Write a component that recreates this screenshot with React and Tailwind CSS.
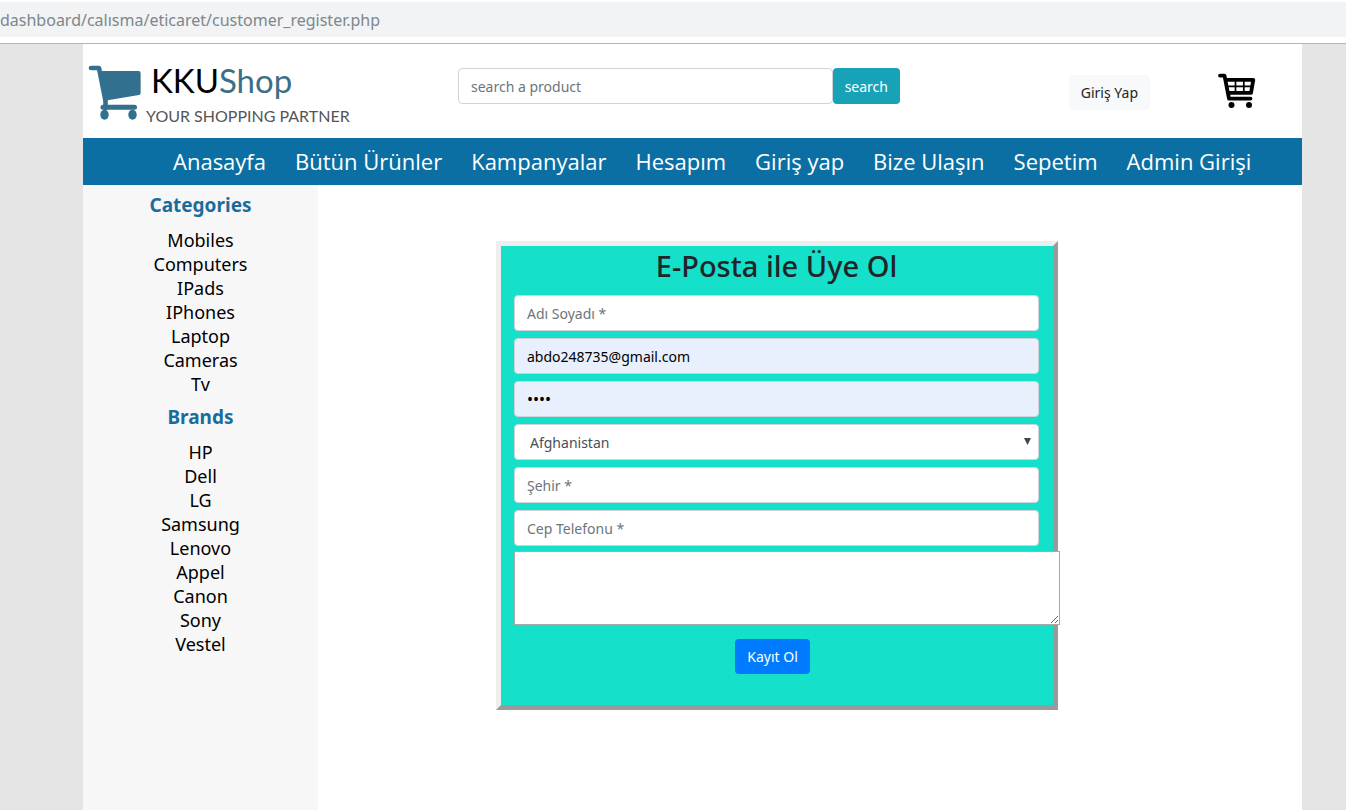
import React from 'react';

const navItems = [
  'Anasayfa',
  'Bütün Ürünler',
  'Kampanyalar',
  'Hesapım',
  'Giriş yap',
  'Bize Ulaşın',
  'Sepetim',
  'Admin Girişi',
];

const categories = ['Mobiles', 'Computers', 'IPads', 'IPhones', 'Laptop', 'Cameras', 'Tv'];

const brands = ['HP', 'Dell', 'LG', 'Samsung', 'Lenovo', 'Appel', 'Canon', 'Sony', 'Vestel'];

const fieldClass =
  'block h-[36px] w-full rounded-[4px] border border-[#ced4da] px-[12px] placeholder:text-[#6c757d]';

function LogoCart() {
  return (
    <svg className="h-[60px] w-[54px] shrink-0" viewBox="0 0 54 60" fill="#31708f" aria-hidden="true">
      <path
        d="M3 6H11L17.500 39V46"
        fill="none"
        stroke="#31708f"
        strokeWidth="4.600"
        strokeLinecap="round"
        strokeLinejoin="round"
      />
      <path d="M12 9H50.500Q52.600 9 52.600 11V31Q52.600 32.800 51 33.100L18 38.500Z" />
      <path d="M15 45.300H46.500" stroke="#31708f" strokeWidth="5" strokeLinecap="round" />
      <ellipse cx="16.500" cy="52.800" rx="4.200" ry="5" />
      <ellipse cx="44.500" cy="52.800" rx="4.200" ry="5" />
    </svg>
  );
}

function BasketIcon() {
  return (
    <svg className="h-[36px] w-[38px]" viewBox="0 0 38 36" fill="none" stroke="#000" aria-hidden="true">
      <path d="M2 2.600H6.500L11 25.600H32.500" strokeWidth="3.800" strokeLinecap="round" strokeLinejoin="round" />
      <path d="M8 6.800H35.300L33 19.800H10.500" strokeWidth="3.800" strokeLinejoin="round" />
      <path d="M9 13.300H34M17.500 7V20M25.800 7V20" strokeWidth="1.700" />
      <circle cx="13.500" cy="32" r="3" fill="#000" stroke="none" />
      <circle cx="31" cy="32" r="3" fill="#000" stroke="none" />
    </svg>
  );
}

function SideList({ title, items }) {
  return (
    <section className="text-center">
      <h2 className="text-[19px] leading-[24px] font-bold text-[#1a6c9c]">{title}</h2>
      <ul className="mt-[11px] text-[18px] leading-[24px] text-black">
        {items.map((item) => (
          <li key={item}>
            <a href="#">{item}</a>
          </li>
        ))}
      </ul>
    </section>
  );
}

export default function App() {
  return (
    <div className="flex min-h-screen flex-col bg-white font-['Noto_Sans','Open_Sans',sans-serif] text-[#212529]">
      <div className="border-b border-[#b3b5b6] pt-[2px] pb-[6px]">
        <div className="flex h-[35px] items-center bg-[#f1f3f4] text-[16px] text-[#80868b]">
          <span className="whitespace-nowrap">dashboard/calısma/eticaret/customer_register.php</span>
        </div>
      </div>

      <div className="flex flex-1 flex-col bg-[#e5e5e5] pr-[44px] pl-[83px]">
        <header className="flex h-[94px] items-start bg-white pl-[5px]">
          <a href="#" className="flex w-[370px] shrink-0 pt-[18px]">
            <LogoCart />
            <span className="flex flex-col pl-[4px] font-['Lato','Open_Sans',sans-serif] whitespace-nowrap">
              <span className="pl-[5px] text-[33px] leading-[36px] text-black">
                KKU<span className="text-[#3c6e88]">Shop</span>
              </span>
              <span className="mt-[6px] text-[16px] leading-[24px] text-[#555555]">YOUR SHOPPING PARTNER</span>
            </span>
          </a>

          <form className="flex w-[442px] pt-[24px] text-[14px]" onSubmit={(e) => e.preventDefault()}>
            <input
              type="text"
              aria-label="search a product"
              placeholder="search a product"
              className="h-[36px] min-w-0 flex-1 rounded-[4px] border border-[#ced4da] bg-white px-[12px] placeholder:text-[#6c757d]"
            />
            <button type="submit" className="h-[36px] rounded-[4px] bg-[#17a2b8] px-[12px] text-white">
              search
            </button>
          </form>

          <div className="ml-auto flex items-start gap-[68px] pr-[46px] text-[14px]">
            <button type="button" className="mt-[31px] h-[35px] rounded-[4px] bg-[#f8f9fa] px-[12px]">
              Giriş Yap
            </button>
            <a href="#" aria-label="Sepetim" className="mt-[29px]">
              <BasketIcon />
            </a>
          </div>
        </header>

        <nav className="h-[47px] bg-[#0b6fa4] pl-[90px]">
          <ul className="flex h-full items-center gap-[29px] font-['Open_Sans','Noto_Sans',sans-serif] text-[22px] whitespace-nowrap text-white">
            {navItems.map((item) => (
              <li key={item}>
                <a href="#">{item}</a>
              </li>
            ))}
          </ul>
        </nav>

        <div className="flex flex-1 bg-white">
          <aside className="flex w-[235px] shrink-0 flex-col gap-[9px] bg-[#f7f7f7] pt-[8px]">
            <SideList title="Categories" items={categories} />
            <SideList title="Brands" items={brands} />
          </aside>

          <main className="flex flex-1 justify-center pt-[56px] pr-[66px]">
            <form
              className="h-[469px] w-[562px] border-[5px] border-t-[#eeeeee] border-r-[#9a9a9a] border-b-[#9a9a9a] border-l-[#eeeeee] bg-[#15e0c9] pr-[14px] pl-[13px] text-[14px]"
              onSubmit={(e) => e.preventDefault()}
            >
              <h1 className="text-center text-[29px] leading-[40px] font-medium">E-Posta ile Üye Ol</h1>
              <div className="mt-[9px] flex flex-col gap-[7px]">
                <input type="text" aria-label="Adı Soyadı" placeholder="Adı Soyadı *" className={`${fieldClass} bg-white`} />
                <input
                  type="email"
                  aria-label="E-Posta"
                  defaultValue="abdo248735@gmail.com"
                  className={`${fieldClass} bg-[#e8f0fe] text-black`}
                />
                <input
                  type="password"
                  aria-label="Şifre"
                  defaultValue="1234"
                  className={`${fieldClass} bg-[#e8f0fe] text-[16px] text-black`}
                />
                <div className="relative">
                  <select
                    aria-label="Ülke"
                    defaultValue="Afghanistan"
                    className="block h-[36px] w-full appearance-none rounded-[4px] border border-[#ced4da] bg-white px-[15px] text-[#495057]"
                  >
                    <option>Afghanistan</option>
                  </select>
                  <svg
                    className="pointer-events-none absolute top-[14px] right-[8px] h-[7px] w-[7px]"
                    viewBox="0 0 7 7"
                    fill="#40464c"
                    aria-hidden="true"
                  >
                    <path d="M0 0H7L3.500 7Z" />
                  </svg>
                </div>
                <input type="text" aria-label="Şehir" placeholder="Şehir *" className={`${fieldClass} bg-white`} />
                <input
                  type="tel"
                  aria-label="Cep Telefonu"
                  placeholder="Cep Telefonu *"
                  className={`${fieldClass} bg-white`}
                />
              </div>
              <textarea
                aria-label="Adres"
                className="mt-[5px] block h-[74px] w-[546px] resize border border-[#a9a9a9] bg-white p-[2px]"
              />
              <div className="mt-[14px] flex justify-center pr-[8px]">
                <button type="submit" className="h-[35px] rounded-[4px] bg-[#007bff] px-[12px] text-white">
                  Kayıt Ol
                </button>
              </div>
            </form>
          </main>
        </div>
      </div>
    </div>
  );
}
